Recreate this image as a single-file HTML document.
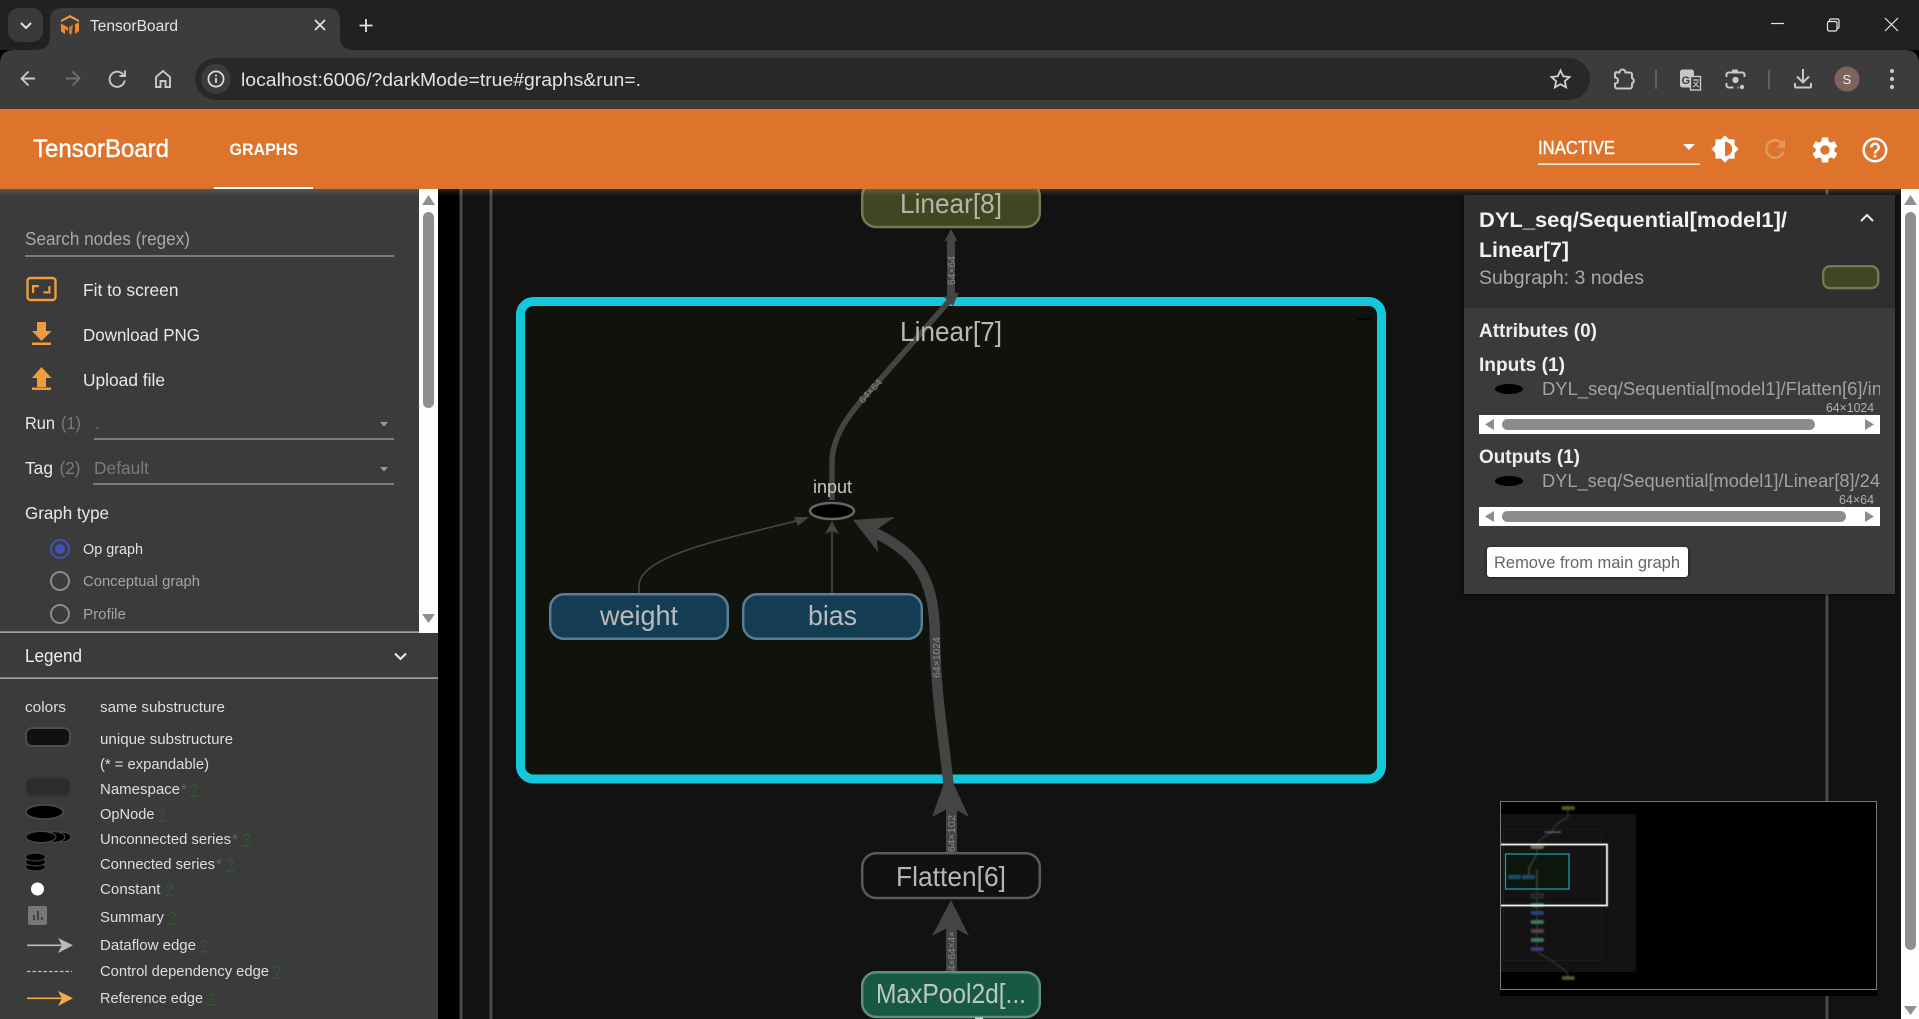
<!DOCTYPE html>
<html><head><meta charset="utf-8"><title>TensorBoard</title>
<style>html,body{margin:0;padding:0;background:#000;overflow:hidden;width:1919px;height:1019px}svg{display:block}text{font-family:"Liberation Sans",sans-serif;white-space:pre}</style></head>
<body>
<svg xmlns="http://www.w3.org/2000/svg" width="1919" height="1019" viewBox="0 0 1919 1019">
<defs>
<linearGradient id="sh" x1="0" y1="0" x2="0" y2="1"><stop offset="0" stop-color="#fff" stop-opacity=".14"/><stop offset="1" stop-color="#fff" stop-opacity="0"/></linearGradient>
<filter id="b1"><feGaussianBlur stdDeviation=".5"/></filter>
<filter id="b2"><feGaussianBlur stdDeviation=".75"/></filter>
<filter id="ps" x="-5%" y="-5%" width="110%" height="110%"><feDropShadow dx="0" dy="1" stdDeviation="2" flood-color="#000" flood-opacity=".6"/></filter>
<clipPath id="c1"><rect x="1542" y="375" width="338" height="30"/></clipPath>
<clipPath id="c2"><rect x="1542" y="467" width="338" height="30"/></clipPath>
<clipPath id="mm"><rect x="1501" y="802" width="375" height="187"/></clipPath>
</defs>

<!-- graph canvas -->
<rect x="438" y="189" width="1481" height="830" fill="#121212"/>
<rect x="438" y="189" width="22" height="830" fill="#000"/>
<rect x="459.5" y="189" width="3" height="830" fill="#4a4a4a"/>
<rect x="489.5" y="189" width="3" height="830" fill="#4a4a4a"/>
<rect x="1825.5" y="189" width="3" height="830" fill="#4a4a4a"/>

<!-- Linear[7] expanded -->
<rect x="520.5" y="301.5" width="861" height="477.5" rx="13" fill="#10120c" stroke="#14c8dc" stroke-width="9"/>
<rect x="1357" y="318" width="13" height="2" fill="#050505"/>

<!-- edges -->
<g fill="#444" stroke="none">
<rect x="947" y="238" width="8" height="62"/>
<polygon points="951,229 958,242 951,238 944,242"/>
<polygon points="959,292 944,297 953,306"/>
<polygon points="809,517 794,517 798,526"/>
<polygon points="832,521 839,534 832,531 825,534"/>
<polygon points="853,520 895,517 876,530 878,552"/>
<polygon points="948,772 969,817 951,807 932,817"/>
<rect x="946" y="805" width="11" height="47"/>
<polygon points="951,900 969,936 951,926 932,936"/>
<rect x="946" y="925" width="11" height="46"/>
</g>
<g fill="none" stroke="#444">
<path d="M951 299L877 383C850 412 832 435 832 463V500" stroke-width="5.5"/>
<path d="M639 593V586C639 556 720 540 800 520" stroke-width="1.7"/>
<path d="M832 593V530" stroke-width="1.7"/>
<path d="M949 790C945 745 936 700 935 640C935 585 922 555 875 533" stroke-width="10.5"/>
</g>
<text x="900" y="341" font-size="28" fill="#b9b9b4" textLength="102" lengthAdjust="spacingAndGlyphs">Linear[7]</text>
<g font-size="10" fill="#8a8a8a">
<text transform="translate(955,285) rotate(-90)" textLength="29" lengthAdjust="spacingAndGlyphs">64×64</text>
<text transform="translate(863,404) rotate(-47)" textLength="29" lengthAdjust="spacingAndGlyphs">64×64</text>
<text transform="translate(940,678) rotate(-90)" textLength="41" lengthAdjust="spacingAndGlyphs">64×1024</text>
<text transform="translate(955,852) rotate(-90)" textLength="37" lengthAdjust="spacingAndGlyphs">64×102</text>
<text transform="translate(955,971) rotate(-90)" textLength="40" lengthAdjust="spacingAndGlyphs">4×64×4×</text>
</g>

<!-- input node -->
<text x="813" y="493" font-size="18" fill="#c4c4c4" textLength="39" lengthAdjust="spacingAndGlyphs">input</text>
<ellipse cx="832" cy="511" rx="22" ry="8" fill="#000" stroke="#666" stroke-width="2.5"/>

<!-- nodes -->
<rect x="550.2" y="594.2" width="177.6" height="44.6" rx="14" fill="#143c53" stroke="#5d7d93" stroke-width="2.5"/>
<text x="600" y="625" font-size="28" fill="#bbb" textLength="78" lengthAdjust="spacingAndGlyphs">weight</text>
<rect x="743.2" y="594.2" width="178.6" height="44.6" rx="14" fill="#143c53" stroke="#5d7d93" stroke-width="2.5"/>
<text x="808" y="625" font-size="28" fill="#bbb" textLength="49" lengthAdjust="spacingAndGlyphs">bias</text>

<rect x="862.2" y="182" width="177.6" height="45" rx="14" fill="#3f4722" stroke="#6f7a56" stroke-width="2.5"/>
<text x="900" y="213" font-size="28" fill="#b4b4a8" textLength="102" lengthAdjust="spacingAndGlyphs">Linear[8]</text>

<rect x="862.2" y="853.2" width="177.6" height="44.8" rx="14" fill="#111" stroke="#5a5a5a" stroke-width="2.5"/>
<text x="896" y="886" font-size="28" fill="#b5b5b5" textLength="110" lengthAdjust="spacingAndGlyphs">Flatten[6]</text>

<rect x="862.2" y="972.2" width="177.6" height="44.8" rx="14" fill="#185a41" stroke="#5d9078" stroke-width="2.5"/>
<text x="876" y="1003" font-size="28" fill="#bcc8c2" textLength="150" lengthAdjust="spacingAndGlyphs">MaxPool2d[...</text>
<rect x="975" y="1017.5" width="8" height="1.5" fill="#cfe0d8"/>

<!-- minimap -->
<rect x="1500" y="801" width="377" height="195" fill="#000"/>
<g clip-path="url(#mm)">
<rect x="1490" y="814" width="146" height="158" rx="3" fill="#131313"/>
<rect x="1503.5" y="829.5" width="98" height="131" fill="none" stroke="#1c1c1c"/>
<g filter="url(#b2)">
<path d="M1568 810V817C1560 822 1552 826 1552.6 832C1545 836 1537 840 1537 847V949C1537 956 1552 958 1553 962C1560 968 1568 970 1568 976" fill="none" stroke="#3c3c3c" stroke-width="1.1"/>
<rect x="1505.5" y="854" width="63.5" height="35" fill="#10120c"/>
<path d="M1537 854L1529 868V877M1537 889V870" stroke="#444" stroke-width="1" fill="none"/>
<rect x="1508" y="875" width="13" height="4" rx="2" fill="#1a4c66"/><rect x="1522" y="875" width="13" height="4" rx="2" fill="#1a4c66"/>
<rect x="1530.5" y="845" width="13.5" height="4" rx="2" fill="#6b6d44"/>
<rect x="1530.5" y="894" width="13.5" height="4" rx="2" fill="#222" stroke="#4a4a4a" stroke-width=".5"/>
<rect x="1530.5" y="903" width="13.5" height="4" rx="2" fill="#377a60"/>
<rect x="1530.5" y="911" width="13.5" height="4" rx="2" fill="#26407c"/>
<rect x="1530.5" y="920" width="13.5" height="4" rx="2" fill="#377a60"/>
<rect x="1530.5" y="929" width="13.5" height="4" rx="2" fill="#5c4141"/>
<rect x="1530.5" y="938" width="13.5" height="4" rx="2" fill="#377a60"/>
<rect x="1530.5" y="947" width="13.5" height="4" rx="2" fill="#4f3375"/>
<rect x="1561.5" y="806" width="13.5" height="4" rx="2" fill="#5f5130"/>
<rect x="1561.5" y="976" width="13.5" height="4" rx="2" fill="#5f5130"/>
<rect x="1545" y="831.5" width="16" height="1.2" fill="#777"/>
</g>
<rect x="1505.5" y="854" width="63.5" height="35" fill="none" stroke="#1a9aa8" stroke-width="1.3"/>
<rect x="1480" y="844.5" width="127" height="61" fill="none" stroke="#e8e8e8" stroke-width="1.8" filter="url(#b1)"/>
<rect x="1480" y="844.5" width="127" height="61" fill="none" stroke="#f0f0f0" stroke-width="1"/>
</g>
<rect x="1500.5" y="801.5" width="376" height="188" fill="none" stroke="#777" stroke-width="1"/>

<!-- info panel -->
<g filter="url(#ps)">
<rect x="1464" y="195" width="431" height="399" fill="#3b3b3b"/>
</g>
<rect x="1464" y="195" width="431" height="113" fill="#2f2f2f"/>
<text x="1479" y="227" font-size="21" font-weight="bold" fill="#f2f2f2" textLength="308" lengthAdjust="spacingAndGlyphs">DYL_seq/Sequential[model1]/</text>
<text x="1479" y="257" font-size="21" font-weight="bold" fill="#f2f2f2" textLength="90" lengthAdjust="spacingAndGlyphs">Linear[7]</text>
<text x="1479" y="284" font-size="19" fill="#a8a8a8" textLength="165" lengthAdjust="spacingAndGlyphs">Subgraph: 3 nodes</text>
<path d="M1861 221l6-6 6 6" fill="none" stroke="#eee" stroke-width="2"/>
<rect x="1823.2" y="266.2" width="55" height="22" rx="7" fill="#3f4722" stroke="#6f7a56" stroke-width="2.4"/>
<text x="1479" y="337" font-size="19" font-weight="bold" fill="#eee" textLength="118" lengthAdjust="spacingAndGlyphs">Attributes (0)</text>
<text x="1479" y="371" font-size="19" font-weight="bold" fill="#eee" textLength="86" lengthAdjust="spacingAndGlyphs">Inputs (1)</text>
<ellipse cx="1509" cy="389" rx="14" ry="5" fill="#000"/>
<g clip-path="url(#c1)"><text x="1542" y="395" font-size="18" fill="#a2a2a2" textLength="340" lengthAdjust="spacingAndGlyphs">DYL_seq/Sequential[model1]/Flatten[6]/in</text></g>
<text x="1826" y="412" font-size="12.5" fill="#b0b0b0" textLength="48" lengthAdjust="spacingAndGlyphs">64×1024</text>
<rect x="1479" y="415" width="401" height="19" fill="#fff"/>
<rect x="1502" y="419" width="313" height="11" rx="5.5" fill="#8c8c8c"/>
<polygon points="1485,424.5 1494,419 1494,430" fill="#8c8c8c"/><polygon points="1874,424.5 1865,419 1865,430" fill="#8c8c8c"/>
<text x="1479" y="463" font-size="19" font-weight="bold" fill="#eee" textLength="101" lengthAdjust="spacingAndGlyphs">Outputs (1)</text>
<ellipse cx="1509" cy="481" rx="14" ry="5" fill="#000"/>
<g clip-path="url(#c2)"><text x="1542" y="487" font-size="18" fill="#a2a2a2" textLength="338" lengthAdjust="spacingAndGlyphs">DYL_seq/Sequential[model1]/Linear[8]/24</text></g>
<text x="1839" y="504" font-size="12.5" fill="#b0b0b0" textLength="35" lengthAdjust="spacingAndGlyphs">64×64</text>
<rect x="1479" y="507" width="401" height="19" fill="#fff"/>
<rect x="1502" y="511" width="344" height="11" rx="5.5" fill="#8c8c8c"/>
<polygon points="1485,516.5 1494,511 1494,522" fill="#8c8c8c"/><polygon points="1874,516.5 1865,511 1865,522" fill="#8c8c8c"/>
<rect x="1487" y="547" width="201" height="30" rx="3" fill="#fff" filter="url(#ps)"/>
<text x="1494" y="568" font-size="16.5" fill="#666" textLength="186" lengthAdjust="spacingAndGlyphs">Remove from main graph</text>

<!-- page scrollbar -->
<rect x="1901" y="189" width="18" height="830" fill="#fdfdfd"/>
<rect x="1905" y="212" width="11" height="738" rx="5.5" fill="#8f8f8f"/>
<polygon points="1910.5,195 1917,205 1904,205" fill="#8f8f8f"/>
<polygon points="1910.5,1015 1904,1006 1917,1006" fill="#8f8f8f"/>

<!-- sidebar -->
<rect x="0" y="189" width="438" height="830" fill="#3b3b3b"/>
<rect x="419" y="189" width="19" height="444" fill="#fdfdfd"/>
<rect x="423" y="212" width="11" height="196" rx="5.5" fill="#8f8f8f"/>
<polygon points="428.5,195 435,205 422,205" fill="#8f8f8f"/>
<polygon points="428.5,623 422,614 435,614" fill="#8f8f8f"/>

<text x="25" y="245" font-size="18" fill="#a8a8a8" textLength="165" lengthAdjust="spacingAndGlyphs">Search nodes (regex)</text>
<rect x="25" y="255.5" width="369" height="1" fill="#bdbdbd"/>

<rect x="27.5" y="278" width="28" height="22" rx="3" fill="none" stroke="#f09c3a" stroke-width="2.4"/>
<path d="M32 293v-8h7v2.2h-4.8V293zM50.5 286v7.5h-7v-2.2h4.8V286z" fill="#f09c3a"/>
<path d="M37 322h9v9h5.5L41.5 341 32 331h5zM32 342.5h19v2.5H32z" fill="#f09c3a"/>
<path d="M41.5 367L51.5 378H46v9H37v-9h-5zM32 387.5h19v2.5H32z" fill="#f09c3a"/>

<g font-size="17.5" fill="#e8e8e8">
<text x="83" y="296" textLength="95.5" lengthAdjust="spacingAndGlyphs">Fit to screen</text>
<text x="83" y="341" textLength="117" lengthAdjust="spacingAndGlyphs">Download PNG</text>
<text x="83" y="386" textLength="82" lengthAdjust="spacingAndGlyphs">Upload file</text>
<text x="25" y="429" textLength="30" lengthAdjust="spacingAndGlyphs">Run</text>
<text x="25" y="474" textLength="28" lengthAdjust="spacingAndGlyphs">Tag</text>
<text x="25" y="519" textLength="84" lengthAdjust="spacingAndGlyphs">Graph type</text>
</g>
<g font-size="17.5" fill="#7a7a7a">
<text x="61" y="429" textLength="20" lengthAdjust="spacingAndGlyphs">(1)</text>
<text x="59.5" y="474" textLength="21" lengthAdjust="spacingAndGlyphs">(2)</text>
<text x="95" y="429">.</text>
<text x="94" y="474" textLength="55" lengthAdjust="spacingAndGlyphs">Default</text>
</g>
<rect x="94" y="438.5" width="300" height="1" fill="#bdbdbd"/>
<rect x="93" y="483.5" width="301" height="1" fill="#bdbdbd"/>
<polygon points="380,422 388,422 384,426.5" fill="#999"/>
<polygon points="380,467 388,467 384,471.5" fill="#999"/>

<circle cx="60" cy="549" r="9" fill="none" stroke="#3f51b5" stroke-width="2"/><circle cx="60" cy="549" r="5" fill="#3f51b5"/>
<circle cx="60" cy="581" r="9" fill="none" stroke="#8a8a8a" stroke-width="2"/>
<circle cx="60" cy="614" r="9" fill="none" stroke="#8a8a8a" stroke-width="2"/>
<text x="83" y="554" font-size="15" fill="#e0e0e0" textLength="60" lengthAdjust="spacingAndGlyphs">Op graph</text>
<text x="83" y="586" font-size="15" fill="#a4a4a4" textLength="117" lengthAdjust="spacingAndGlyphs">Conceptual graph</text>
<text x="83" y="619" font-size="15" fill="#a4a4a4" textLength="43" lengthAdjust="spacingAndGlyphs">Profile</text>

<rect x="0" y="631.5" width="419" height="1.2" fill="#c8c8c8"/>
<text x="25" y="662" font-size="18" fill="#eee" textLength="57" lengthAdjust="spacingAndGlyphs">Legend</text>
<path d="M395 653.5l5.5 5.5 5.5-5.5" fill="none" stroke="#eee" stroke-width="2"/>
<rect x="0" y="677.5" width="438" height="1.2" fill="#c8c8c8"/>

<g font-size="15" fill="#dedede">
<text x="25" y="712" textLength="41" lengthAdjust="spacingAndGlyphs">colors</text>
<text x="100" y="712" textLength="125" lengthAdjust="spacingAndGlyphs">same substructure</text>
<text x="100" y="744" textLength="133" lengthAdjust="spacingAndGlyphs">unique substructure</text>
<text x="100" y="769" textLength="109" lengthAdjust="spacingAndGlyphs">(* = expandable)</text>
<text x="100" y="794" textLength="80" lengthAdjust="spacingAndGlyphs">Namespace</text>
<text x="100" y="819" textLength="54.5" lengthAdjust="spacingAndGlyphs">OpNode</text>
<text x="100" y="844" textLength="131" lengthAdjust="spacingAndGlyphs">Unconnected series</text>
<text x="100" y="869" textLength="115" lengthAdjust="spacingAndGlyphs">Connected series</text>
<text x="100" y="894" textLength="60.5" lengthAdjust="spacingAndGlyphs">Constant</text>
<text x="100" y="922" textLength="64" lengthAdjust="spacingAndGlyphs">Summary</text>
<text x="100" y="950" textLength="96" lengthAdjust="spacingAndGlyphs">Dataflow edge</text>
<text x="100" y="976" textLength="169" lengthAdjust="spacingAndGlyphs">Control dependency edge</text>
<text x="100" y="1003" textLength="103" lengthAdjust="spacingAndGlyphs">Reference edge</text>
</g>
<g font-size="15" fill="#666">
<text x="181" y="794">*</text><text x="232" y="844">*</text><text x="216" y="869">*</text>
</g>
<g font-size="15" fill="#2f5a30" text-decoration="underline">
<text x="190" y="794">?</text><text x="158" y="819">?</text><text x="242" y="844">?</text><text x="226" y="869">?</text><text x="165" y="894">?</text><text x="168" y="922">?</text><text x="200" y="950">?</text><text x="273" y="976">?</text><text x="207" y="1003">?</text>
</g>

<rect x="26" y="728" width="44" height="18" rx="6" fill="#111" stroke="#4d4d4d" stroke-width="2"/>
<rect x="26" y="778" width="44" height="18" rx="6" fill="#2c2c2c" stroke="#333" stroke-width="2"/>
<ellipse cx="44.5" cy="812" rx="18.5" ry="7" fill="#000" stroke="#4d4d4d" stroke-width="1.5"/>
<ellipse cx="60" cy="837" rx="11" ry="5" fill="#000" stroke="#4d4d4d"/>
<ellipse cx="54" cy="837" rx="11" ry="5.2" fill="#000" stroke="#4d4d4d"/>
<ellipse cx="41" cy="837" rx="15" ry="5.5" fill="#000" stroke="#4d4d4d"/>
<ellipse cx="35.5" cy="867" rx="10" ry="4" fill="#000" stroke="#4d4d4d"/>
<ellipse cx="35.5" cy="862" rx="10" ry="4" fill="#000" stroke="#4d4d4d"/>
<ellipse cx="35.5" cy="857" rx="10" ry="4" fill="#000" stroke="#4d4d4d"/>
<circle cx="37.5" cy="889" r="6.5" fill="#fff"/>
<rect x="28" y="906" width="19" height="19" rx="2" fill="#777"/>
<path d="M33 920v-5h1.8v5zM37 920v-9h1.8v9zM41 920v-3h1.8v3z" fill="#3b3b3b"/>
<rect x="27" y="944.5" width="40" height="1.6" fill="#bbb"/><polygon points="58,938 73,945.3 58,953 62,945.3" fill="#bbb"/>
<path d="M27 971.5H72" stroke="#c0c0c0" stroke-width="1.2" stroke-dasharray="3.5 2" fill="none"/>
<rect x="27" y="997.5" width="40" height="1.6" fill="#f0ad4e"/><polygon points="58,991 73,998.3 58,1006 62,998.3" fill="#f0ad4e"/>

<!-- TB header -->
<rect x="0" y="109" width="1919" height="80" fill="#de742b"/>
<rect x="0" y="189" width="419" height="7" fill="url(#sh)"/>
<rect x="438" y="189" width="1463" height="7" fill="url(#sh)"/>
<text x="33" y="157" font-size="25" fill="#fff" stroke="#fff" stroke-width=".45" textLength="136" lengthAdjust="spacingAndGlyphs">TensorBoard</text>
<text x="229.5" y="155" font-size="16.5" font-weight="bold" fill="#fff" textLength="68.5" lengthAdjust="spacingAndGlyphs">GRAPHS</text>
<rect x="214" y="187" width="99" height="2" fill="#fff"/>
<text x="1538" y="154" font-size="18" fill="#fff" stroke="#fff" stroke-width=".4" textLength="77" lengthAdjust="spacingAndGlyphs">INACTIVE</text>
<rect x="1538" y="163.5" width="162" height="1.3" fill="#fff"/>
<polygon points="1683,144 1695,144 1689,150" fill="#fff"/>
<g fill="#fff">
<path transform="translate(1710.6,134.6) scale(1.2)" d="M20 15.31L23.31 12 20 8.69V4h-4.69L12 .69 8.69 4H4v4.69L.69 12 4 15.31V20h4.69L12 23.31 15.31 20H20v-4.69zM12 18V6c3.31 0 6 2.69 6 6s-2.69 6-6 6z"/>
<path transform="translate(1760,134) scale(1.25)" opacity=".25" d="M17.65 6.35C16.2 4.9 14.21 4 12 4c-4.42 0-7.99 3.58-7.99 8s3.57 8 7.99 8c3.73 0 6.84-2.55 7.73-6h-2.08c-.82 2.33-3.04 4-5.65 4-3.31 0-6-2.69-6-6s2.69-6 6-6c1.66 0 3.14.69 4.22 1.78L13 11h7V4l-2.35 2.35z"/>
<path transform="translate(1809.4,134.4) scale(1.3)" d="M19.14 12.94c.04-.3.06-.61.06-.94 0-.32-.02-.64-.07-.94l2.03-1.58c.18-.14.23-.41.12-.61l-1.92-3.32c-.12-.22-.37-.29-.59-.22l-2.39.96c-.5-.38-1.03-.7-1.62-.94l-.36-2.54c-.04-.24-.24-.41-.48-.41h-3.84c-.24 0-.43.17-.47.41l-.36 2.54c-.59.24-1.13.57-1.62.94l-2.39-.96c-.22-.08-.47 0-.59.22L2.74 8.87c-.12.21-.08.47.12.61l2.03 1.58c-.05.3-.09.63-.09.94s.02.64.07.94l-2.03 1.58c-.18.14-.23.41-.12.61l1.92 3.32c.12.22.37.29.59.22l2.39-.96c.5.38 1.03.7 1.62.94l.36 2.54c.05.24.24.41.48.41h3.84c.24 0 .44-.17.47-.41l.36-2.54c.59-.24 1.13-.56 1.62-.94l2.39.96c.22.08.47 0 .59-.22l1.92-3.32c.12-.22.07-.47-.12-.61l-2.01-1.58zM12 15.6c-1.98 0-3.6-1.62-3.6-3.6s1.62-3.6 3.6-3.6 3.6 1.62 3.6 3.6-1.62 3.6-3.6 3.6z"/>
<path transform="translate(1860,135) scale(1.25)" d="M11 18h2v-2h-2v2zm1-16C6.48 2 2 6.48 2 12s4.48 10 10 10 10-4.48 10-10S17.52 2 12 2zm0 18c-4.41 0-8-3.59-8-8s3.59-8 8-8 8 3.59 8 8-3.59 8-8 8zm0-14c-2.21 0-4 1.79-4 4h2c0-1.1.9-2 2-2s2 .9 2 2c0 2-3 1.75-3 5h2c0-2.25 3-2.5 3-5 0-2.21-1.79-4-4-4z"/>
</g>

<!-- browser chrome -->
<rect x="0" y="0" width="1919" height="50" fill="#202222"/>
<path d="M0 109V64Q0 50 14 50H1905Q1919 50 1919 64V109Z" fill="#3c3c3c"/>
<path d="M36 50Q50 50 50 36V20Q50 8 62 8H328Q340 8 340 20V36Q340 50 354 50Z" fill="#3c3c3c"/>
<rect x="8" y="8" width="35" height="34" rx="11" fill="#3a3a3a"/>
<path d="M21 23l5 5 5-5" fill="none" stroke="#e3e3e3" stroke-width="2"/>
<!-- favicon -->
<g>
<polygon points="61,20 70,15 79,20 79,22 70,17.5 61,22" fill="#f2a044"/>
<polygon points="61,23.5 68,27.5 68,31 65,29 65,34 61,31.5" fill="#ef8a25"/>
<polygon points="69,27 73,24.5 71.5,35 69,33.5" fill="#e5751c"/>
<polygon points="75,24 79,22.5 79,31 75,34" fill="#f08c2c"/>
</g>
<text x="90" y="31" font-size="15.5" fill="#e3e3e3" textLength="88" lengthAdjust="spacingAndGlyphs">TensorBoard</text>
<path d="M315 20l10 10M325 20l-10 10" stroke="#e3e3e3" stroke-width="1.8" fill="none"/>
<path d="M366 19v13M359.5 25.5h13" stroke="#e3e3e3" stroke-width="1.8" fill="none"/>

<g fill="none" stroke-width="1.9">
<path d="M35 78.5H21.5M28.5 71.5l-7 7 7 7" stroke="#c8c8c8"/>
<path d="M66 78.5H79.5M72.5 71.5l7 7-7 7" stroke="#6e6e6e"/>
<path d="M123.5 75A7.6 7.6 0 1 0 124.7 80.5" stroke="#c8c8c8"/>
<path d="M125 70.5V76H119.5" stroke="#c8c8c8"/>
<path d="M156 87V77l7-6 7 6v10h-4.5v-6h-5v6z" stroke="#c8c8c8"/>
</g>

<rect x="195" y="58" width="1395" height="42" rx="21" fill="#282828"/>
<circle cx="216" cy="79" r="15" fill="#3c3c3c"/>
<circle cx="216" cy="79" r="7.6" fill="none" stroke="#dedede" stroke-width="1.7"/>
<rect x="215.1" y="78" width="1.8" height="4.8" fill="#dedede"/><rect x="215.1" y="74.7" width="1.8" height="1.9" fill="#dedede"/>
<text x="241" y="86" font-size="18.5" fill="#e3e3e3" textLength="400" lengthAdjust="spacingAndGlyphs">localhost:6006/?darkMode=true#graphs&amp;run=.</text>
<path d="M1560.5 70.5l2.7 5.8 6.3.7-4.7 4.2 1.3 6.2-5.6-3.2-5.6 3.2 1.3-6.2-4.7-4.2 6.3-.7z" fill="none" stroke="#d0d0d0" stroke-width="1.8"/>

<g fill="none" stroke="#c8c8c8" stroke-width="2">
<path d="M1615 72.5h4.5a3 3 0 0 1 6 0h4.5a2 2 0 0 1 2 2v3.5a3 3 0 0 1 0 5.5v3a2 2 0 0 1-2 2h-13a2 2 0 0 1-2-2v-3a3 3 0 0 0 0-6v-3.5a2 2 0 0 1 2-2z"/>
<path d="M1726.5 77v-2.5a2 2 0 0 1 2-2h14a2 2 0 0 1 2 2v2.5M1726.5 83v2.5a2 2 0 0 0 2 2h5M1737.5 87.5h1"/>
<path d="M1795 83v3.5a1 1 0 0 0 1 1h14a1 1 0 0 0 1-1V83M1803 69v13M1797 76.5l6 6 6-6"/>
</g>
<rect x="1655" y="70" width="2" height="19" fill="#606060"/>
<rect x="1768" y="70" width="2" height="19" fill="#606060"/>
<!-- translate -->
<rect x="1680" y="69.5" width="14" height="18" rx="2.5" fill="#c8c8c8"/>
<rect x="1690.5" y="76.5" width="10" height="13.5" fill="#3c3c3c" stroke="#c8c8c8" stroke-width="1.4"/>
<path d="M1693 80h6M1696 79v2M1698 81c-1 3-3 5-5 6M1694 82c1 2 3 4 5 5" fill="none" stroke="#c8c8c8"/>
<text x="1681.5" y="84" font-size="11" font-weight="bold" fill="#3c3c3c">G</text>
<!-- lens -->
<rect x="1732" y="69.5" width="6" height="3" rx="1" fill="#c8c8c8"/>
<circle cx="1735.5" cy="80" r="3.2" fill="#c8c8c8"/><circle cx="1742" cy="87" r="2.2" fill="#c8c8c8"/>
<circle cx="1847" cy="79" r="12.5" fill="#7d655c"/>
<text x="1842.5" y="84" font-size="13" fill="#f0f0f0">S</text>
<circle cx="1892" cy="71" r="2.1" fill="#c8c8c8"/><circle cx="1892" cy="79" r="2.1" fill="#c8c8c8"/><circle cx="1892" cy="87" r="2.1" fill="#c8c8c8"/>

<!-- window controls -->
<g fill="none" stroke="#e6e6e6" stroke-width="1.2">
<path d="M1771 23.5h13"/>
<rect x="1827.5" y="21.5" width="9.5" height="9.5" rx="1.5"/>
<path d="M1829.5 21v-.5a1.5 1.5 0 0 1 1.5-1.5h6.5a1.5 1.5 0 0 1 1.5 1.5V27a1.5 1.5 0 0 1-1.5 1.5"/>
<path d="M1885 18l13 13M1898 18l-13 13"/>
</g>
</svg>
</body></html>
